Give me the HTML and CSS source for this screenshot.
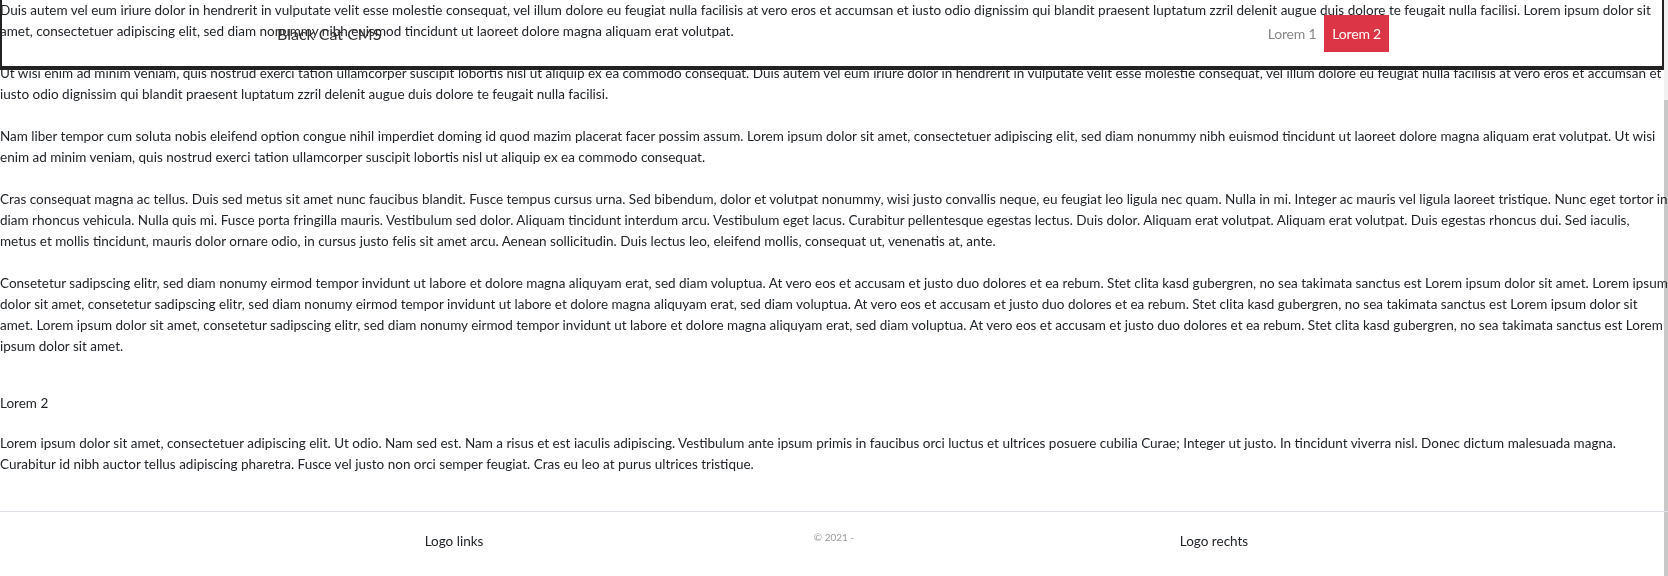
FILE: index.html
```html
<!DOCTYPE html>
<html lang="de">
<head>
  <meta charset="UTF-8" />
  <meta name="viewport" content="width=device-width, initial-scale=1.0" />
  <title>Black Cat CMS</title>
  <link rel="stylesheet" href="styles.css">
</head>
<body>
  <!-- Navigation -->
  <header class="navbar">
    <div class="container nav-inner">
      <a class="brand" href="#">Black Cat CMS</a>
      <ul class="nav">
        <li><a href="#" class="nav-link">Lorem 1</a></li>
        <li><a href="#" class="nav-link active">Lorem 2</a></li>
      </ul>
    </div>
  </header>

  <main class="content">
    <p>Duis autem vel eum iriure dolor in hendrerit in vulputate velit esse molestie consequat, vel illum dolore eu feugiat nulla facilisis at vero eros et accumsan et iusto odio dignissim qui blandit praesent luptatum zzril delenit augue duis dolore te feugait nulla facilisi. Lorem ipsum dolor sit amet, consectetuer adipiscing elit, sed diam nonummy nibh euismod tincidunt ut laoreet dolore magna aliquam erat volutpat.</p>
    <p>Ut wisi enim ad minim veniam, quis nostrud exerci tation ullamcorper suscipit lobortis nisl ut aliquip ex ea commodo consequat. Duis autem vel eum iriure dolor in hendrerit in vulputate velit esse molestie consequat, vel illum dolore eu feugiat nulla facilisis at vero eros et accumsan et iusto odio dignissim qui blandit praesent luptatum zzril delenit augue duis dolore te feugait nulla facilisi.</p>
    <p>Nam liber tempor cum soluta nobis eleifend option congue nihil imperdiet doming id quod mazim placerat facer possim assum. Lorem ipsum dolor sit amet, consectetuer adipiscing elit, sed diam nonummy nibh euismod tincidunt ut laoreet dolore magna aliquam erat volutpat. Ut wisi enim ad minim veniam, quis nostrud exerci tation ullamcorper suscipit lobortis nisl ut aliquip ex ea commodo consequat.</p>
    <p>Cras consequat magna ac tellus. Duis sed metus sit amet nunc faucibus blandit. Fusce tempus cursus urna. Sed bibendum, dolor et volutpat nonummy, wisi justo convallis neque, eu feugiat leo ligula nec quam. Nulla in mi. Integer ac mauris vel ligula laoreet tristique. Nunc eget tortor in diam rhoncus vehicula. Nulla quis mi. Fusce porta fringilla mauris. Vestibulum sed dolor. Aliquam tincidunt interdum arcu. Vestibulum eget lacus. Curabitur pellentesque egestas lectus. Duis dolor. Aliquam erat volutpat. Aliquam erat volutpat. Duis egestas rhoncus dui. Sed iaculis, metus et mollis tincidunt, mauris dolor ornare odio, in cursus justo felis sit amet arcu. Aenean sollicitudin. Duis lectus leo, eleifend mollis, consequat ut, venenatis at, ante.</p>
    <p>Consetetur sadipscing elitr, sed diam nonumy eirmod tempor invidunt ut labore et dolore magna aliquyam erat, sed diam voluptua. At vero eos et accusam et justo duo dolores et ea rebum. Stet clita kasd gubergren, no sea takimata sanctus est Lorem ipsum dolor sit amet. Lorem ipsum dolor sit amet, consetetur sadipscing elitr, sed diam nonumy eirmod tempor invidunt ut labore et dolore magna aliquyam erat, sed diam voluptua. At vero eos et accusam et justo duo dolores et ea rebum. Stet clita kasd gubergren, no sea takimata sanctus est Lorem ipsum dolor sit amet. Lorem ipsum dolor sit amet, consetetur sadipscing elitr, sed diam nonumy eirmod tempor invidunt ut labore et dolore magna aliquyam erat, sed diam voluptua. At vero eos et accusam et justo duo dolores et ea rebum. Stet clita kasd gubergren, no sea takimata sanctus est Lorem ipsum dolor sit amet.</p>

    <h2 class="section-title">Lorem 2</h2>
    <p>Lorem ipsum dolor sit amet, consectetuer adipiscing elit. Ut odio. Nam sed est. Nam a risus et est iaculis adipiscing. Vestibulum ante ipsum primis in faucibus orci luctus et ultrices posuere cubilia Curae; Integer ut justo. In tincidunt viverra nisl. Donec dictum malesuada magna. Curabitur id nibh auctor tellus adipiscing pharetra. Fusce vel justo non orci semper feugiat. Cras eu leo at purus ultrices tristique.</p>
  </main>

  <!-- Footer -->
  <footer class="footer">
    <div class="container">
      <div class="row">
        <div class="col">Logo links</div>
        <div class="col copyright">&copy; 2021 -</div>
        <div class="col">Logo rechts</div>
      </div>
    </div>
  </footer>

  <!-- schmale Scrollleiste -->
  <div class="scroll-track" aria-hidden="true"><div class="scroll-thumb"></div></div>

  <script src="script.js"></script>
</body>
</html>
```
FILE: styles.css
```css
* {
  box-sizing: border-box;
}

html::-webkit-scrollbar {
  display: none;
}

body {
  margin: 0;
  font-family: "Source Sans Pro", Lato, "Liberation Sans", sans-serif;
  font-size: 13.5px;
  line-height: 21px;
  color: #212529;
  background: #fff;
}

a {
  text-decoration: none;
}

.container {
  max-width: 1140px;
  margin: 0 auto;
  padding: 0 15px;
}

/* Navigation */
.navbar {
  position: fixed;
  top: 0;
  left: 0;
  right: 4px;
  z-index: 10;
  height: 70px;
  border: 2px solid #222;
  border-top: none;
  border-bottom-width: 4px;
}

.nav-inner {
  height: 100%;
  display: flex;
  align-items: center;
  justify-content: space-between;
}

.brand {
  font-size: 16px;
  color: #333;
}

.nav {
  list-style: none;
  margin: 0 -2px 0 0;
  padding: 0;
  display: flex;
}

.nav-link {
  display: block;
  padding: 8px;
  font-size: 14px;
  letter-spacing: -0.2px;
  line-height: 21px;
  color: #888;
}

.nav-link.active {
  background: #dc3545;
  color: #fff;
}

/* Inhalt */
.content {
  padding: 121px 0 15px;
}

.content p {
  margin: 0 0 21px;
}

.section-title {
  font-size: 13.5px;
  font-weight: normal;
  line-height: 21px;
  margin: 36px 0 19px;
}

/* Footer */
.footer {
  border-top: 1px solid #dee2e6;
  padding: 19px 0 24px;
}

.row {
  display: flex;
  margin: 0 -15px;
}

.col {
  flex: 1;
  padding: 0 15px;
  text-align: center;
}

.copyright {
  font-size: 10px;
  line-height: 13px;
  color: #999;
}

/* Scrollleiste, liegt unter dem Text */
.scroll-track {
  position: fixed;
  top: 0;
  right: 0;
  bottom: 0;
  z-index: -1;
  width: 4px;
  background: #f1f1f1;
}

.scroll-thumb {
  margin-top: 100px;
  height: 476px;
  background: #c8c8c8;
}
```
FILE: script.js
```js
// Seite ganz nach unten scrollen
window.scrollTo(0, document.documentElement.scrollHeight);
```
